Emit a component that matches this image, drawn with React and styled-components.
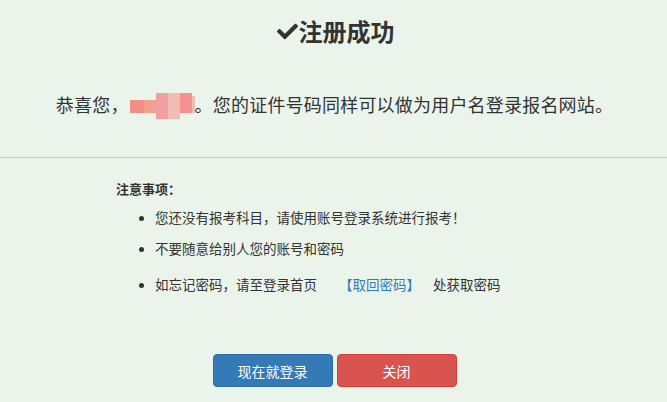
import styled, { createGlobalStyle } from 'styled-components'
import { FaCheck } from 'react-icons/fa'

const GlobalStyle = createGlobalStyle`
  html, body {
    margin: 0;
    padding: 0;
    background: #ebf4eb;
  }
  body {
    font-family: "Noto Sans CJK SC", "Noto Sans", sans-serif;
    color: #333;
  }
`

const mosaic = [
  { w: 14, c: '#f28f85', top: 7, h: 13 },
  { w: 12, c: '#f3a08d', top: 7, h: 13 },
  { w: 12, c: '#f1a1a3', top: 0, h: 26 },
  { w: 12, c: '#f1bcb2', top: 0, h: 26 },
  { w: 12, c: '#f2918f', top: 0, h: 20 },
  { w: 3, c: '#eabdb6', top: 3, h: 17 }
]

const App = () => {
  return (
    <>
      <GlobalStyle />
      <StyledPage>
        <StyledTitle>
          <FaCheck size={21} />
          注册成功
        </StyledTitle>

        <StyledMessage>
          恭喜您，
          <StyledMosaic>
            {mosaic.map((m, i) => (
              <StyledTile key={i} $w={m.w} $c={m.c} $top={m.top} $h={m.h} />
            ))}
          </StyledMosaic>
          。您的证件号码同样可以做为用户名登录报名网站。
        </StyledMessage>

        <StyledDivider />

        <StyledNotes>
          <StyledNotesTitle>注意事项：</StyledNotesTitle>
          <StyledList>
            <StyledItem>您还没有报考科目，请使用账号登录系统进行报考！</StyledItem>
            <StyledItem>不要随意给别人您的账号和密码</StyledItem>
            <StyledItem $spaced>
              如忘记密码，请至登录首页
              <StyledLink href='#'>【取回密码】</StyledLink>
              处获取密码
            </StyledItem>
          </StyledList>
        </StyledNotes>

        <StyledActions>
          <StyledButton $variant='primary'>现在就登录</StyledButton>
          <StyledButton $variant='danger'>关闭</StyledButton>
        </StyledActions>
      </StyledPage>
    </>
  )
}

const StyledPage = styled.div`
  width: 667px;
  height: 402px;
  overflow: hidden;
  background: #ebf4eb;
`

const StyledTitle = styled.h2`
  margin: 0;
  padding-top: 15px;
  height: 32px;
  display: flex;
  align-items: center;
  justify-content: center;
  column-gap: 1px;
  font-size: 24px;
  font-weight: 700;
  color: #333;
  line-height: 32px;
  padding-left: 4px;

  svg {
    margin-top: 1px;
  }
`

const StyledMessage = styled.p`
  margin: 42px 0 0;
  height: 30px;
  display: flex;
  align-items: center;
  justify-content: center;
  font-size: 18px;
  line-height: 30px;
  color: #333;
  letter-spacing: 0.2px;
  padding-left: 2px;
`

const StyledMosaic = styled.span`
  display: inline-flex;
  align-items: flex-start;
  height: 26px;
  margin-left: 1px;
  position: relative;
  top: 2px;
`

const StyledTile = styled.span`
  display: block;
  width: ${({ $w }) => $w}px;
  height: ${({ $h }) => $h}px;
  margin-top: ${({ $top }) => $top}px;
  background: ${({ $c }) => $c};
`

const StyledDivider = styled.hr`
  margin: 38px 0 0;
  border: 0;
  border-top: 1px solid #c5cbc5;
`

const StyledNotes = styled.div`
  padding: 22px 0 0 116px;
`

const StyledNotesTitle = styled.div`
  font-size: 13px;
  font-weight: 700;
  line-height: 18px;
  color: #333;
`

const StyledList = styled.ul`
  margin: 0;
  padding: 9px 0 0 39px;
  list-style: disc;
`

const StyledItem = styled.li`
  font-size: 13.5px;
  line-height: 20px;
  color: #333;
  margin-top: ${({ $spaced }) => ($spaced ? '16px' : '11px')};
  padding-left: 0;

  &:first-child {
    margin-top: 0;
  }

  &::marker {
    font-size: 12px;
  }
`

const StyledLink = styled.a`
  color: #2f7bbf;
  text-decoration: none;
  margin: 0 13px 0 22px;
`

const StyledActions = styled.div`
  display: flex;
  justify-content: center;
  column-gap: 4px;
  padding-top: 60px;
  padding-left: 2px;
`

const StyledButton = styled.button`
  width: 120px;
  height: 33px;
  border-radius: 4px;
  font-family: "Noto Sans CJK SC", "Noto Sans", sans-serif;
  font-size: 14px;
  color: #fff;
  cursor: pointer;
  border: 1px solid ${({ $variant }) => ($variant === 'danger' ? '#d43f3a' : '#2e6da4')};
  background: ${({ $variant }) => ($variant === 'danger' ? '#d9534f' : '#337ab7')};
`

export default App
